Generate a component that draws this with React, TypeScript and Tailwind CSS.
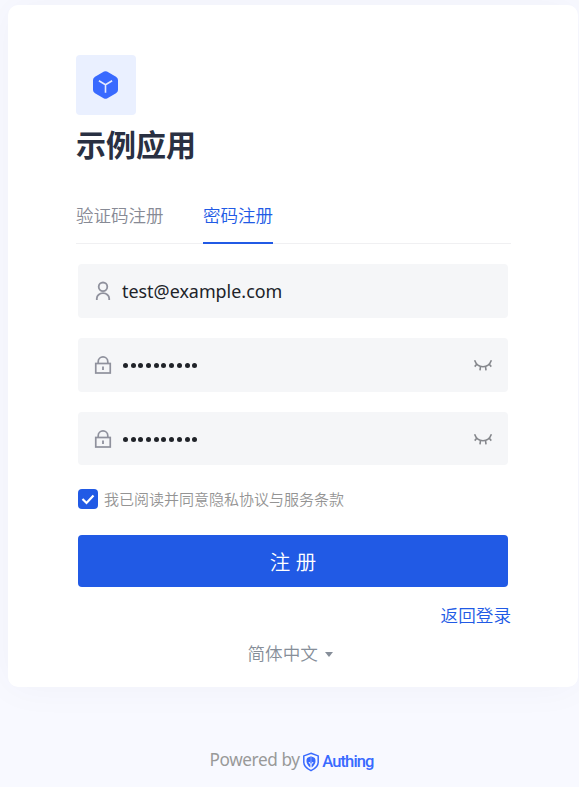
import React, { useState } from 'react';

function UserIcon() {
  return (
    <svg width="18" height="20" viewBox="0 0 18 20" fill="none" stroke="#8f919d" strokeWidth="1.8">
      <circle cx="9" cy="5.8" r="4.3" />
      <path d="M2.8 19v-1.600a6.200 5.200 0 0 1 12.400 0v1.600" />
    </svg>
  );
}

function LockIcon() {
  return (
    <svg width="18" height="20" viewBox="0 0 18 20" fill="none" stroke="#8f919d" strokeWidth="1.7">
      <rect x="1.750" y="8.500" width="14.500" height="9.500" />
      <path d="M4.200 8V6.800a4.800 4.900 0 0 1 9.600 0V8" />
      <path d="M9 11.500v3.500" strokeWidth="1.800" />
    </svg>
  );
}

function ClosedEyeIcon() {
  return (
    <svg width="20" height="12" viewBox="0 0 20 12" fill="none" stroke="#85878c" strokeWidth="1.600">
      <path d="M1.600 1.300C3.200 5.700 6.200 7.700 10 7.700S16.800 5.700 18.400 1.300" />
      <path d="M4 5 1.700 7.600M7.500 7.500 7 11.300M12.500 7.500l.5 3.800M16 5l2.300 2.600" />
    </svg>
  );
}

function AppLogo() {
  return (
    <div className="flex h-[60px] w-[60px] items-center justify-center rounded bg-[#eaf0ff]">
      <svg width="28" height="30" viewBox="0 0 28 30">
        <path
          d="M12 1.600 3 6.800Q1 8 1 10v10q0 2 2 3.200l9 5.200q1.500.8 3 0l9-5.200q2-1.200 2-3.200V10q0-2-2-3.200l-9-5.200q-1.500-.8-3 0Z"
          fill="#396aff"
        />
        <path d="M6.900 10.700 13.500 14.700l6.600-4M13.500 14.700v8" fill="none" stroke="#e3eaff" strokeWidth="1.600" />
      </svg>
    </div>
  );
}

function AuthingMark() {
  return (
    <svg width="16" height="20" viewBox="0 0 16 20" fill="none">
      <path d="M8 1.200 15.200 3.900v6.300c0 3.700-3.300 6.600-7.200 8.400-3.900-1.800-7.200-4.700-7.200-8.400V3.900Z" stroke="#396aff" strokeWidth="1.500" />
      <path d="M7.400 4.500 5 5.600C3.600 6.300 3.300 8 3.600 10c.3 2.200 1.900 4.300 3.800 5.500v-3L5.300 10.300h1.300l.8-1Z" fill="#396aff" />
      <path d="M8.600 4.500 11 5.600c1.400.7 1.700 2.400 1.400 4.400-.3 2.200-1.900 4.300-3.800 5.500v-3l2.100-2.200H9.400l-.8-1Z" fill="#396aff" />
      <path d="M7.300 4.500h1.400v6.500L8 12l-.7-1Z" fill="#396aff" />
    </svg>
  );
}

function PasswordField({ className }: { className: string }) {
  return (
    <div className={`flex items-center rounded bg-[#f5f6f8] pl-4 pr-[15px] ${className}`}>
      <LockIcon />
      <div className="ml-[11px] flex gap-[2.700px]">
        {Array.from({ length: 10 }, (_, i) => (
          <span key={i} className="h-[5px] w-[5px] rounded-full bg-[#202329]" />
        ))}
      </div>
      <button className="ml-auto" aria-label="显示密码">
        <ClosedEyeIcon />
      </button>
    </div>
  );
}

export default function App() {
  const [tab, setTab] = useState(1);
  return (
    <div className="h-[787px] w-[579px] overflow-hidden bg-[#f8f9ff] pl-2 pt-[5px] font-['Noto_Sans','Noto_Sans_CJK_SC',sans-serif]">
      <main className="h-[682px] w-[570px] rounded-[10px] bg-white px-[68px] pt-[50px] shadow-[0_0_40px_rgba(40,50,110,0.04)]">
        <AppLogo />
        <h1 className="mt-2 h-10 font-['Noto_Sans_CJK_SC',sans-serif] text-[30px] font-bold leading-10 text-[#293042]">示例应用</h1>
        <nav className="mt-[26px] flex h-[55px] w-[435px] gap-[39.500px] border-b border-[#f0f0f2] font-['Noto_Sans_CJK_SC',sans-serif] text-[17.500px] font-[350]">
          {['验证码注册', '密码注册'].map((name, i) => (
            <button
              key={name}
              onClick={() => setTab(i)}
              className={
                i === tab
                  ? 'h-[55px] whitespace-nowrap border-b-2 border-[#215ae5] pb-px leading-[52px] text-[#215ae5]'
                  : 'h-[55px] whitespace-nowrap border-b-2 border-transparent pb-px leading-[52px] text-[#878a95]'
              }
            >
              {name}
            </button>
          ))}
        </nav>
        <form className="ml-0.5 mt-5 w-[430px]" onSubmit={(e) => e.preventDefault()}>
          <div className="flex flex-col gap-5">
            <div className="flex h-[54px] items-center rounded bg-[#f5f6f8] pl-4">
              <UserIcon />
              <span className="ml-[10px] text-[17.900px] text-[#202329]">test@example.com</span>
            </div>
            <PasswordField className="h-[54px]" />
            <PasswordField className="h-[53px] pt-px" />
          </div>
          <label className="mt-6 flex h-5 items-center">
            <span className="flex h-5 w-5 items-center justify-center rounded-sm bg-[#215ae5]">
              <svg width="14" height="12" viewBox="0 0 14 12" fill="none" stroke="white" strokeWidth="2.200">
                <path d="m1.500 6 4 4 7-7.500" />
              </svg>
            </span>
            <span className="ml-1.5 whitespace-nowrap text-[15px] font-[350] text-[#949494]">我已阅读并同意隐私协议与服务条款</span>
          </label>
          <button className="mt-[26px] h-[52px] w-full rounded bg-[#215ae5] pt-px font-['Noto_Sans_CJK_SC',sans-serif] text-[20.500px] font-[350] text-white [word-spacing:1px]">
            注 册
          </button>
        </form>
        <div className="mt-[15px] flex h-[26px] w-[435px] items-center justify-end text-[17.600px] font-[350] text-[#215ae5]">
          <a>返回登录</a>
        </div>
        <div className="mt-3 flex h-[26px] items-center pl-[171.500px] text-[17.600px] font-[350] text-[#868e99]">
          简体中文
          <span className="ml-[7px] mt-0.5 border-x-[4.500px] border-t-[5px] border-x-transparent border-t-[#868e99]" />
        </div>
      </main>
      <footer className="mt-[59px] flex h-7 items-center pl-[201.500px]">
        <span className="text-[17.200px] tracking-[-0.400px] text-[#999999]">Powered by</span>
        <span className="ml-[3.500px] mt-[3px]">
          <AuthingMark />
        </span>
        <span className="ml-[3px] mt-[5px] font-['Roboto',sans-serif] text-[16.500px] font-medium tracking-[-0.850px] text-[#396aff]">Authing</span>
      </footer>
    </div>
  );
}
